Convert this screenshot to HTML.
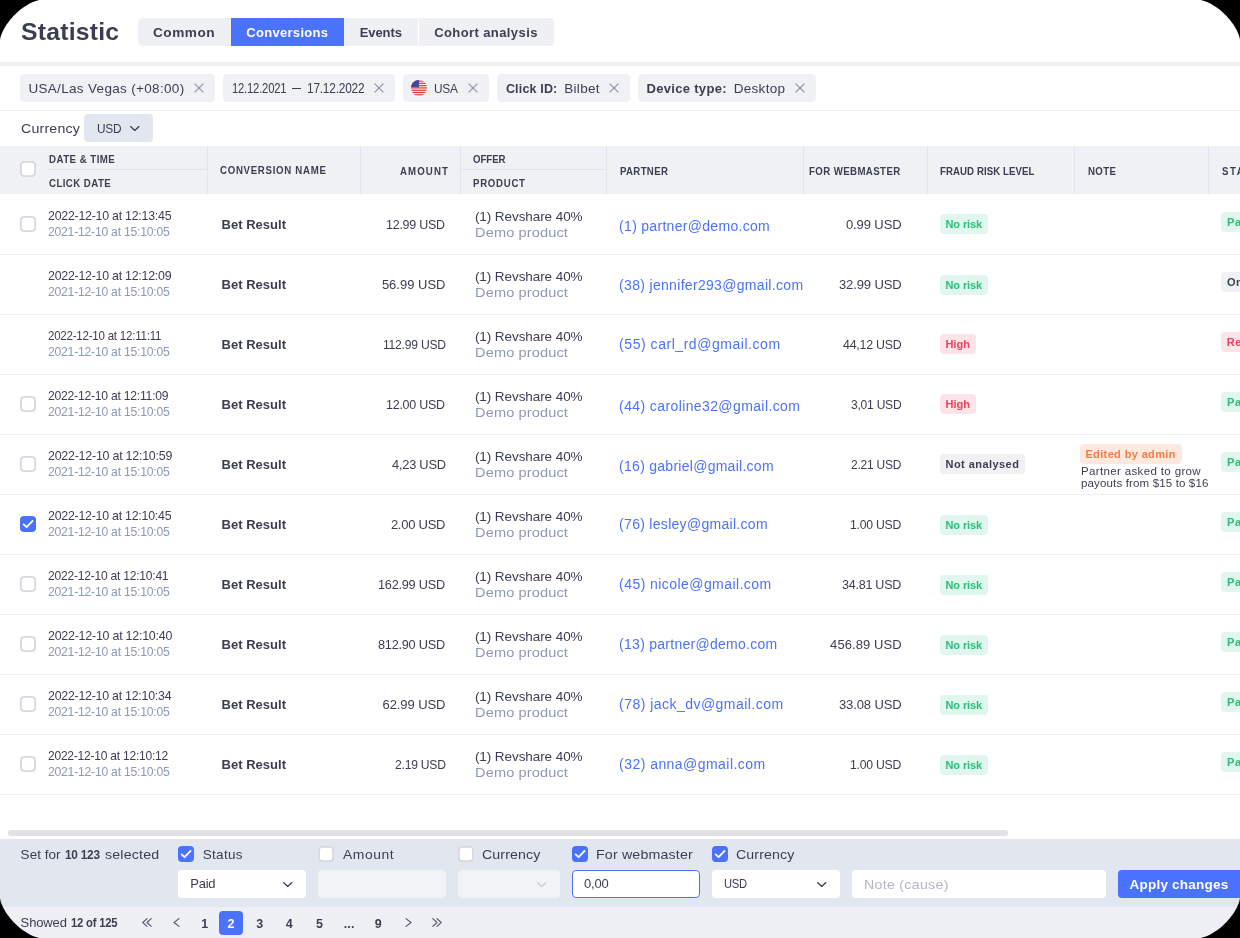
<!DOCTYPE html><html><head><meta charset="utf-8"><style>*{box-sizing:border-box;margin:0;padding:0}html,body{width:1240px;height:938px;overflow:hidden;background:#000}body{font-family:"Liberation Sans",sans-serif;color:#3a3e52;position:relative}.app{position:absolute;left:0;top:0;width:1240px;height:938px;background:#fff;overflow:hidden}.a{position:absolute;white-space:nowrap}.app{will-change:transform}</style></head><body><div class="app">
<div class="a" style="left:20.60px;top:20.00px;font-size:24.00px;line-height:24.00px;color:#3a3e52;font-weight:bold;letter-spacing:0.235px;transform:scaleX(1.030);transform-origin:0 0">Statistic</div>
<div class="a" style="left:138px;top:18px;width:416px;height:28px;background:#eff0f4;border-radius:5px;"></div>
<div class="a" style="left:231px;top:18px;width:113px;height:28px;background:#4b72fd;border-radius:0px;"></div>
<div class="a" style="left:418px;top:18px;width:1px;height:28px;background:#fff;border-radius:0px;"></div>
<div class="a" style="left:153.30px;top:26.00px;font-size:13.00px;line-height:13.00px;color:#3a3e52;font-weight:bold;letter-spacing:0.487px;transform:scaleX(1.050);transform-origin:0 0">Common</div>
<div class="a" style="left:246.30px;top:26.00px;font-size:13.00px;line-height:13.00px;color:#fff;font-weight:bold;letter-spacing:0.296px">Conversions</div>
<div class="a" style="left:359.70px;top:26.00px;font-size:13.00px;line-height:13.00px;color:#3a3e52;font-weight:bold;letter-spacing:-0.085px">Events</div>
<div class="a" style="left:434.20px;top:26.00px;font-size:13.00px;line-height:13.00px;color:#3a3e52;font-weight:bold;letter-spacing:0.405px">Cohort analysis</div>
<div class="a" style="left:0px;top:62px;width:1240px;height:4px;background:#eff0f4;border-radius:0px;"></div>
<div class="a" style="left:20px;top:74px;width:195px;height:28px;background:#eff1f5;border-radius:4px;"></div>
<div class="a" style="left:223px;top:74px;width:172px;height:28px;background:#eff1f5;border-radius:4px;"></div>
<div class="a" style="left:403px;top:74px;width:86px;height:28px;background:#eff1f5;border-radius:4px;"></div>
<div class="a" style="left:497px;top:74px;width:133px;height:28px;background:#eff1f5;border-radius:4px;"></div>
<div class="a" style="left:638px;top:74px;width:178px;height:28px;background:#eff1f5;border-radius:4px;"></div>
<div class="a" style="left:28.40px;top:82.00px;font-size:13.50px;line-height:13.50px;color:#3a3e52;letter-spacing:0.325px">USA/Las Vegas (+08:00)</div>
<svg class="a" style="left:194px;top:83px" width="10" height="10" viewBox="0 0 10 10"><path d="M0.6 0.6L9.4 9.4M9.4 0.6L0.6 9.4" stroke="#8a92aa" stroke-width="1.15" fill="none"/></svg>
<div class="a" style="left:232.00px;top:81.00px;font-size:14.00px;line-height:14.00px;color:#3a3e52;letter-spacing:-0.250px;transform:scaleX(0.804);transform-origin:0 0">12.12.2021</div>
<div class="a" style="left:292px;top:87.6px;width:9px;height:1.3px;background:#3a3e52;border-radius:0px;"></div>
<div class="a" style="left:306.50px;top:81.00px;font-size:14.00px;line-height:14.00px;color:#3a3e52;letter-spacing:-0.250px;transform:scaleX(0.848);transform-origin:0 0">17.12.2022</div>
<svg class="a" style="left:374px;top:83px" width="10" height="10" viewBox="0 0 10 10"><path d="M0.6 0.6L9.4 9.4M9.4 0.6L0.6 9.4" stroke="#8a92aa" stroke-width="1.15" fill="none"/></svg>
<svg class="a" style="left:411px;top:80px" width="16" height="16" viewBox="0 0 16 16"><defs><clipPath id="fc"><circle cx="8" cy="8" r="8"/></clipPath></defs><g clip-path="url(#fc)"><rect width="16" height="16" fill="#f5f5f5"/><rect y="0.40" width="16" height="1.25" fill="#e73b3b"/><rect y="2.70" width="16" height="1.25" fill="#e73b3b"/><rect y="5.00" width="16" height="1.25" fill="#e73b3b"/><rect y="7.30" width="16" height="1.25" fill="#e73b3b"/><rect y="9.60" width="16" height="1.25" fill="#e73b3b"/><rect y="11.90" width="16" height="1.25" fill="#e73b3b"/><rect y="14.20" width="16" height="1.25" fill="#e73b3b"/><rect width="8" height="7.3" fill="#41479b"/></g></svg>
<div class="a" style="left:433.90px;top:82.00px;font-size:13.00px;line-height:13.00px;color:#3a3e52;letter-spacing:-0.250px;transform:scaleX(0.915);transform-origin:0 0">USA</div>
<svg class="a" style="left:468px;top:83px" width="10" height="10" viewBox="0 0 10 10"><path d="M0.6 0.6L9.4 9.4M9.4 0.6L0.6 9.4" stroke="#8a92aa" stroke-width="1.15" fill="none"/></svg>
<div class="a" style="left:505.90px;top:83.00px;font-size:12.50px;line-height:12.50px;color:#3a3e52;font-weight:bold;letter-spacing:0.173px">Click ID:</div>
<div class="a" style="left:564.20px;top:82.00px;font-size:13.50px;line-height:13.50px;color:#3a3e52;letter-spacing:0.327px">Bilbet</div>
<svg class="a" style="left:609px;top:83px" width="10" height="10" viewBox="0 0 10 10"><path d="M0.6 0.6L9.4 9.4M9.4 0.6L0.6 9.4" stroke="#8a92aa" stroke-width="1.15" fill="none"/></svg>
<div class="a" style="left:646.60px;top:82.00px;font-size:13.00px;line-height:13.00px;color:#3a3e52;font-weight:bold;letter-spacing:0.300px">Device type:</div>
<div class="a" style="left:733.70px;top:82.00px;font-size:13.50px;line-height:13.50px;color:#3a3e52;letter-spacing:0.297px">Desktop</div>
<svg class="a" style="left:795px;top:83px" width="10" height="10" viewBox="0 0 10 10"><path d="M0.6 0.6L9.4 9.4M9.4 0.6L0.6 9.4" stroke="#8a92aa" stroke-width="1.15" fill="none"/></svg>
<div class="a" style="left:0px;top:110px;width:1240px;height:1px;background:#eef0f4;border-radius:0px;"></div>
<div class="a" style="left:20.80px;top:122.00px;font-size:13.50px;line-height:13.50px;color:#3a3e52;letter-spacing:0.189px;transform:scaleX(1.050);transform-origin:0 0">Currency</div>
<div class="a" style="left:84px;top:114px;width:69px;height:28px;background:#e2e6ee;border-radius:4px;"></div>
<div class="a" style="left:96.60px;top:122.00px;font-size:13.00px;line-height:13.00px;color:#3a3e52;letter-spacing:-0.250px;transform:scaleX(0.913);transform-origin:0 0">USD</div>
<svg class="a" style="left:130.2px;top:126.4px;overflow:visible" width="9.5" height="5" viewBox="0 0 9.5 5"><path d="M0.6 0.6L4.75 4.4L8.9 0.6" stroke="#3a3e52" stroke-width="1.3" fill="none" stroke-linecap="round" stroke-linejoin="round"/></svg>
<div class="a" style="left:0px;top:146px;width:1240px;height:48px;background:#eff1f5;border-radius:0px;"></div>
<div class="a" style="left:207px;top:146px;width:1px;height:48px;background:#dfe4ed;border-radius:0px;"></div>
<div class="a" style="left:360px;top:146px;width:1px;height:48px;background:#dfe4ed;border-radius:0px;"></div>
<div class="a" style="left:460px;top:146px;width:1px;height:48px;background:#dfe4ed;border-radius:0px;"></div>
<div class="a" style="left:606px;top:146px;width:1px;height:48px;background:#dfe4ed;border-radius:0px;"></div>
<div class="a" style="left:803px;top:146px;width:1px;height:48px;background:#dfe4ed;border-radius:0px;"></div>
<div class="a" style="left:927px;top:146px;width:1px;height:48px;background:#dfe4ed;border-radius:0px;"></div>
<div class="a" style="left:1074px;top:146px;width:1px;height:48px;background:#dfe4ed;border-radius:0px;"></div>
<div class="a" style="left:1208px;top:146px;width:1px;height:48px;background:#dfe4ed;border-radius:0px;"></div>
<div class="a" style="left:48px;top:169px;width:159px;height:1px;background:#dfe4ed;border-radius:0px;"></div>
<div class="a" style="left:460px;top:169px;width:146px;height:1px;background:#dfe4ed;border-radius:0px;"></div>
<svg class="a" style="left:20px;top:161px" width="16" height="16" viewBox="0 0 16 16"><rect x="0.9" y="0.9" width="14.2" height="14.2" rx="3.3" fill="#fff" stroke="#d5d8df" stroke-width="1.8"/></svg>
<div class="a" style="left:48.50px;top:154.00px;font-size:11.50px;line-height:11.50px;color:#3a3e52;font-weight:bold;letter-spacing:0.572px;transform:scaleX(0.840);transform-origin:0 0">DATE &amp; TIME</div>
<div class="a" style="left:48.50px;top:178.00px;font-size:11.50px;line-height:11.50px;color:#3a3e52;font-weight:bold;letter-spacing:0.519px;transform:scaleX(0.840);transform-origin:0 0">CLICK DATE</div>
<div class="a" style="left:220.30px;top:165.00px;font-size:11.50px;line-height:11.50px;color:#3a3e52;font-weight:bold;letter-spacing:0.836px;transform:scaleX(0.840);transform-origin:0 0">CONVERSION NAME</div>
<div class="a" style="left:399.80px;top:166.00px;font-size:11.50px;line-height:11.50px;color:#3a3e52;font-weight:bold;letter-spacing:1.312px;transform:scaleX(0.840);transform-origin:0 0">AMOUNT</div>
<div class="a" style="left:473.20px;top:154.00px;font-size:11.50px;line-height:11.50px;color:#3a3e52;font-weight:bold;letter-spacing:-0.041px;transform:scaleX(0.840);transform-origin:0 0">OFFER</div>
<div class="a" style="left:473.20px;top:178.00px;font-size:11.50px;line-height:11.50px;color:#3a3e52;font-weight:bold;letter-spacing:0.841px;transform:scaleX(0.840);transform-origin:0 0">PRODUCT</div>
<div class="a" style="left:619.50px;top:166.00px;font-size:11.50px;line-height:11.50px;color:#3a3e52;font-weight:bold;letter-spacing:0.383px;transform:scaleX(0.840);transform-origin:0 0">PARTNER</div>
<div class="a" style="left:809.20px;top:166.00px;font-size:11.50px;line-height:11.50px;color:#3a3e52;font-weight:bold;letter-spacing:0.476px;transform:scaleX(0.840);transform-origin:0 0">FOR WEBMASTER</div>
<div class="a" style="left:940.30px;top:166.00px;font-size:11.50px;line-height:11.50px;color:#3a3e52;font-weight:bold;letter-spacing:0.081px;transform:scaleX(0.840);transform-origin:0 0">FRAUD RISK LEVEL</div>
<div class="a" style="left:1087.50px;top:166.00px;font-size:11.50px;line-height:11.50px;color:#3a3e52;font-weight:bold;letter-spacing:0.462px;transform:scaleX(0.840);transform-origin:0 0">NOTE</div>
<div class="a" style="left:1221.50px;top:166.00px;font-size:11.50px;line-height:11.50px;color:#3a3e52;font-weight:bold;letter-spacing:1.855px;transform:scaleX(0.840);transform-origin:0 0">STATUS</div>
<div class="a" style="left:0px;top:254px;width:1240px;height:1px;background:#eff0f4;border-radius:0px;"></div>
<svg class="a" style="left:20px;top:216px" width="16" height="16" viewBox="0 0 16 16"><rect x="0.9" y="0.9" width="14.2" height="14.2" rx="3.3" fill="#fff" stroke="#d5d8df" stroke-width="1.8"/></svg>
<div class="a" style="left:48.20px;top:209.00px;font-size:13.00px;line-height:13.00px;color:#3a3e52;letter-spacing:-0.250px;transform:scaleX(0.951);transform-origin:0 0">2022-12-10 at 12:13:45</div>
<div class="a" style="left:48.20px;top:225.00px;font-size:13.00px;line-height:13.00px;color:#8c98b4;letter-spacing:-0.250px;transform:scaleX(0.937);transform-origin:0 0">2021-12-10 at 15:10:05</div>
<div class="a" style="left:221.50px;top:218.00px;font-size:13.00px;line-height:13.00px;color:#3a3e52;font-weight:bold;letter-spacing:0.024px">Bet Result</div>
<div class="a" style="left:386.40px;top:218.00px;font-size:13.00px;line-height:13.00px;color:#3a3e52;letter-spacing:-0.250px;transform:scaleX(0.959);transform-origin:0 0">12.99 USD</div>
<div class="a" style="left:474.90px;top:210.00px;font-size:13.50px;line-height:13.50px;color:#3a3e52;letter-spacing:-0.073px">(1) Revshare 40%</div>
<div class="a" style="left:474.90px;top:226.00px;font-size:13.50px;line-height:13.50px;color:#8c98b4;letter-spacing:0.111px;transform:scaleX(1.080);transform-origin:0 0">Demo product</div>
<div class="a" style="left:619.10px;top:219.00px;font-size:14.00px;line-height:14.00px;color:#4b72fd;letter-spacing:0.299px">(1) partner@demo.com</div>
<div class="a" style="left:845.90px;top:218.00px;font-size:13.00px;line-height:13.00px;color:#3a3e52;letter-spacing:-0.094px">0.99 USD</div>
<div class="a" style="left:940px;top:214px;width:48.2px;height:20px;background:#e0f6ee;border-radius:4px;"></div>
<div class="a" style="left:945.50px;top:219.00px;font-size:11.00px;line-height:11.00px;color:#27c17a;font-weight:bold;letter-spacing:-0.102px">No risk</div>
<div class="a" style="left:1221px;top:212px;width:60px;height:20px;background:#e0f6ee;border-radius:4px;"></div>
<div class="a" style="left:1226.70px;top:217.00px;font-size:11.00px;line-height:11.00px;color:#27c17a;font-weight:bold;letter-spacing:0.550px;transform:scaleX(1.008);transform-origin:0 0">Paid</div>
<div class="a" style="left:0px;top:314px;width:1240px;height:1px;background:#eff0f4;border-radius:0px;"></div>
<div class="a" style="left:48.20px;top:269.00px;font-size:13.00px;line-height:13.00px;color:#3a3e52;letter-spacing:-0.250px;transform:scaleX(0.951);transform-origin:0 0">2022-12-10 at 12:12:09</div>
<div class="a" style="left:48.20px;top:285.00px;font-size:13.00px;line-height:13.00px;color:#8c98b4;letter-spacing:-0.250px;transform:scaleX(0.937);transform-origin:0 0">2021-12-10 at 15:10:05</div>
<div class="a" style="left:221.50px;top:278.00px;font-size:13.00px;line-height:13.00px;color:#3a3e52;font-weight:bold;letter-spacing:0.024px">Bet Result</div>
<div class="a" style="left:381.90px;top:278.00px;font-size:13.00px;line-height:13.00px;color:#3a3e52">56.99 USD</div>
<div class="a" style="left:474.90px;top:270.00px;font-size:13.50px;line-height:13.50px;color:#3a3e52;letter-spacing:-0.073px">(1) Revshare 40%</div>
<div class="a" style="left:474.90px;top:286.00px;font-size:13.50px;line-height:13.50px;color:#8c98b4;letter-spacing:0.111px;transform:scaleX(1.080);transform-origin:0 0">Demo product</div>
<div class="a" style="left:619.10px;top:278.00px;font-size:14.00px;line-height:14.00px;color:#4b72fd;letter-spacing:0.317px">(38) jennifer293@gmail.com</div>
<div class="a" style="left:839.00px;top:278.00px;font-size:13.00px;line-height:13.00px;color:#3a3e52;letter-spacing:-0.124px">32.99 USD</div>
<div class="a" style="left:940px;top:275px;width:48.2px;height:20px;background:#e0f6ee;border-radius:4px;"></div>
<div class="a" style="left:945.50px;top:280.00px;font-size:11.00px;line-height:11.00px;color:#27c17a;font-weight:bold;letter-spacing:-0.102px">No risk</div>
<div class="a" style="left:1221px;top:272px;width:60px;height:20px;background:#eff1f5;border-radius:4px;"></div>
<div class="a" style="left:1226.70px;top:277.00px;font-size:11.00px;line-height:11.00px;color:#3a3e52;font-weight:bold;letter-spacing:0.550px;transform:scaleX(1.001);transform-origin:0 0">On hold</div>
<div class="a" style="left:0px;top:374px;width:1240px;height:1px;background:#eff0f4;border-radius:0px;"></div>
<div class="a" style="left:48.20px;top:329.00px;font-size:13.00px;line-height:13.00px;color:#3a3e52;letter-spacing:-0.250px;transform:scaleX(0.886);transform-origin:0 0">2022-12-10 at 12:11:11</div>
<div class="a" style="left:48.20px;top:345.00px;font-size:13.00px;line-height:13.00px;color:#8c98b4;letter-spacing:-0.250px;transform:scaleX(0.937);transform-origin:0 0">2021-12-10 at 15:10:05</div>
<div class="a" style="left:221.50px;top:338.00px;font-size:13.00px;line-height:13.00px;color:#3a3e52;font-weight:bold;letter-spacing:0.024px">Bet Result</div>
<div class="a" style="left:382.50px;top:338.00px;font-size:13.00px;line-height:13.00px;color:#3a3e52;letter-spacing:-0.250px;transform:scaleX(0.932);transform-origin:0 0">112.99 USD</div>
<div class="a" style="left:474.90px;top:330.00px;font-size:13.50px;line-height:13.50px;color:#3a3e52;letter-spacing:-0.073px">(1) Revshare 40%</div>
<div class="a" style="left:474.90px;top:346.00px;font-size:13.50px;line-height:13.50px;color:#8c98b4;letter-spacing:0.111px;transform:scaleX(1.080);transform-origin:0 0">Demo product</div>
<div class="a" style="left:619.10px;top:337.00px;font-size:14.00px;line-height:14.00px;color:#4b72fd;letter-spacing:0.543px">(55) carl_rd@gmail.com</div>
<div class="a" style="left:842.90px;top:338.00px;font-size:13.00px;line-height:13.00px;color:#3a3e52;letter-spacing:-0.250px;transform:scaleX(0.953);transform-origin:0 0">44,12 USD</div>
<div class="a" style="left:940px;top:334px;width:36px;height:20px;background:#fde4e8;border-radius:4px;"></div>
<div class="a" style="left:945.50px;top:339.00px;font-size:11.00px;line-height:11.00px;color:#f0425c;font-weight:bold;letter-spacing:0.019px">High</div>
<div class="a" style="left:1221px;top:332px;width:60px;height:20px;background:#fde4e8;border-radius:4px;"></div>
<div class="a" style="left:1226.70px;top:337.00px;font-size:11.00px;line-height:11.00px;color:#f0425c;font-weight:bold;letter-spacing:0.524px">Rejected</div>
<div class="a" style="left:0px;top:434px;width:1240px;height:1px;background:#eff0f4;border-radius:0px;"></div>
<svg class="a" style="left:20px;top:396px" width="16" height="16" viewBox="0 0 16 16"><rect x="0.9" y="0.9" width="14.2" height="14.2" rx="3.3" fill="#fff" stroke="#d5d8df" stroke-width="1.8"/></svg>
<div class="a" style="left:48.20px;top:389.00px;font-size:13.00px;line-height:13.00px;color:#3a3e52;letter-spacing:-0.250px;transform:scaleX(0.935);transform-origin:0 0">2022-12-10 at 12:11:09</div>
<div class="a" style="left:48.20px;top:405.00px;font-size:13.00px;line-height:13.00px;color:#8c98b4;letter-spacing:-0.250px;transform:scaleX(0.937);transform-origin:0 0">2021-12-10 at 15:10:05</div>
<div class="a" style="left:221.50px;top:398.00px;font-size:13.00px;line-height:13.00px;color:#3a3e52;font-weight:bold;letter-spacing:0.024px">Bet Result</div>
<div class="a" style="left:386.40px;top:398.00px;font-size:13.00px;line-height:13.00px;color:#3a3e52;letter-spacing:-0.250px;transform:scaleX(0.959);transform-origin:0 0">12.00 USD</div>
<div class="a" style="left:474.90px;top:390.00px;font-size:13.50px;line-height:13.50px;color:#3a3e52;letter-spacing:-0.073px">(1) Revshare 40%</div>
<div class="a" style="left:474.90px;top:406.00px;font-size:13.50px;line-height:13.50px;color:#8c98b4;letter-spacing:0.111px;transform:scaleX(1.080);transform-origin:0 0">Demo product</div>
<div class="a" style="left:619.10px;top:399.00px;font-size:14.00px;line-height:14.00px;color:#4b72fd;letter-spacing:0.392px">(44) caroline32@gmail.com</div>
<div class="a" style="left:851.00px;top:398.00px;font-size:13.00px;line-height:13.00px;color:#3a3e52;letter-spacing:-0.250px;transform:scaleX(0.927);transform-origin:0 0">3,01 USD</div>
<div class="a" style="left:940px;top:394px;width:36px;height:20px;background:#fde4e8;border-radius:4px;"></div>
<div class="a" style="left:945.50px;top:399.00px;font-size:11.00px;line-height:11.00px;color:#f0425c;font-weight:bold;letter-spacing:0.019px">High</div>
<div class="a" style="left:1221px;top:392px;width:60px;height:20px;background:#e0f6ee;border-radius:4px;"></div>
<div class="a" style="left:1226.70px;top:397.00px;font-size:11.00px;line-height:11.00px;color:#27c17a;font-weight:bold;letter-spacing:0.550px;transform:scaleX(1.008);transform-origin:0 0">Paid</div>
<div class="a" style="left:0px;top:494px;width:1240px;height:1px;background:#eff0f4;border-radius:0px;"></div>
<svg class="a" style="left:20px;top:456px" width="16" height="16" viewBox="0 0 16 16"><rect x="0.9" y="0.9" width="14.2" height="14.2" rx="3.3" fill="#fff" stroke="#d5d8df" stroke-width="1.8"/></svg>
<div class="a" style="left:48.20px;top:449.00px;font-size:13.00px;line-height:13.00px;color:#3a3e52;letter-spacing:-0.250px;transform:scaleX(0.957);transform-origin:0 0">2022-12-10 at 12:10:59</div>
<div class="a" style="left:48.20px;top:465.00px;font-size:13.00px;line-height:13.00px;color:#8c98b4;letter-spacing:-0.250px;transform:scaleX(0.937);transform-origin:0 0">2021-12-10 at 15:10:05</div>
<div class="a" style="left:221.50px;top:458.00px;font-size:13.00px;line-height:13.00px;color:#3a3e52;font-weight:bold;letter-spacing:0.024px">Bet Result</div>
<div class="a" style="left:391.50px;top:458.00px;font-size:13.00px;line-height:13.00px;color:#3a3e52;letter-spacing:-0.250px;transform:scaleX(0.989);transform-origin:0 0">4,23 USD</div>
<div class="a" style="left:474.90px;top:450.00px;font-size:13.50px;line-height:13.50px;color:#3a3e52;letter-spacing:-0.073px">(1) Revshare 40%</div>
<div class="a" style="left:474.90px;top:466.00px;font-size:13.50px;line-height:13.50px;color:#8c98b4;letter-spacing:0.111px;transform:scaleX(1.080);transform-origin:0 0">Demo product</div>
<div class="a" style="left:619.10px;top:459.00px;font-size:14.00px;line-height:14.00px;color:#4b72fd;letter-spacing:0.270px">(16) gabriel@gmail.com</div>
<div class="a" style="left:851.30px;top:458.00px;font-size:13.00px;line-height:13.00px;color:#3a3e52;letter-spacing:-0.250px;transform:scaleX(0.921);transform-origin:0 0">2.21 USD</div>
<div class="a" style="left:940px;top:454px;width:84.9px;height:20px;background:#eff1f5;border-radius:4px;"></div>
<div class="a" style="left:945.50px;top:459.00px;font-size:11.00px;line-height:11.00px;color:#3a3e52;font-weight:bold;letter-spacing:0.449px">Not analysed</div>
<div class="a" style="left:1221px;top:452px;width:60px;height:20px;background:#e0f6ee;border-radius:4px;"></div>
<div class="a" style="left:1226.70px;top:457.00px;font-size:11.00px;line-height:11.00px;color:#27c17a;font-weight:bold;letter-spacing:0.550px;transform:scaleX(1.008);transform-origin:0 0">Paid</div>
<div class="a" style="left:1080px;top:444px;width:102px;height:20px;background:#fde9e0;border-radius:4px;"></div>
<div class="a" style="left:1085.40px;top:449.00px;font-size:11.00px;line-height:11.00px;color:#f67c46;font-weight:bold;letter-spacing:0.368px">Edited by admin</div>
<div class="a" style="left:1080.60px;top:466.00px;font-size:11.00px;line-height:11.00px;color:#3a3e52;letter-spacing:0.318px;transform:scaleX(1.050);transform-origin:0 0">Partner asked to grow</div>
<div class="a" style="left:1080.60px;top:478.00px;font-size:11.00px;line-height:11.00px;color:#3a3e52;letter-spacing:0.123px;transform:scaleX(1.050);transform-origin:0 0">payouts from $15 to $16</div>
<div class="a" style="left:0px;top:554px;width:1240px;height:1px;background:#eff0f4;border-radius:0px;"></div>
<svg class="a" style="left:20px;top:516px" width="16" height="16" viewBox="0 0 16 16"><rect x="0" y="0" width="16" height="16" rx="4" fill="#4b72fd"/><path d="M3.6 8.4L6.6 11.2L12.6 4.9" stroke="#fff" stroke-width="1.8" fill="none" stroke-linecap="round" stroke-linejoin="round"/></svg>
<div class="a" style="left:48.20px;top:509.00px;font-size:13.00px;line-height:13.00px;color:#3a3e52;letter-spacing:-0.250px;transform:scaleX(0.951);transform-origin:0 0">2022-12-10 at 12:10:45</div>
<div class="a" style="left:48.20px;top:525.00px;font-size:13.00px;line-height:13.00px;color:#8c98b4;letter-spacing:-0.250px;transform:scaleX(0.937);transform-origin:0 0">2021-12-10 at 15:10:05</div>
<div class="a" style="left:221.50px;top:518.00px;font-size:13.00px;line-height:13.00px;color:#3a3e52;font-weight:bold;letter-spacing:0.024px">Bet Result</div>
<div class="a" style="left:390.90px;top:518.00px;font-size:13.00px;line-height:13.00px;color:#3a3e52;letter-spacing:-0.250px;transform:scaleX(1.000);transform-origin:0 0">2.00 USD</div>
<div class="a" style="left:474.90px;top:510.00px;font-size:13.50px;line-height:13.50px;color:#3a3e52;letter-spacing:-0.073px">(1) Revshare 40%</div>
<div class="a" style="left:474.90px;top:526.00px;font-size:13.50px;line-height:13.50px;color:#8c98b4;letter-spacing:0.111px;transform:scaleX(1.080);transform-origin:0 0">Demo product</div>
<div class="a" style="left:619.10px;top:517.00px;font-size:14.00px;line-height:14.00px;color:#4b72fd;letter-spacing:0.295px">(76) lesley@gmail.com</div>
<div class="a" style="left:850.40px;top:518.00px;font-size:13.00px;line-height:13.00px;color:#3a3e52;letter-spacing:-0.250px;transform:scaleX(0.938);transform-origin:0 0">1.00 USD</div>
<div class="a" style="left:940px;top:515px;width:48.2px;height:20px;background:#e0f6ee;border-radius:4px;"></div>
<div class="a" style="left:945.50px;top:520.00px;font-size:11.00px;line-height:11.00px;color:#27c17a;font-weight:bold;letter-spacing:-0.102px">No risk</div>
<div class="a" style="left:1221px;top:512px;width:60px;height:20px;background:#e0f6ee;border-radius:4px;"></div>
<div class="a" style="left:1226.70px;top:517.00px;font-size:11.00px;line-height:11.00px;color:#27c17a;font-weight:bold;letter-spacing:0.550px;transform:scaleX(1.008);transform-origin:0 0">Paid</div>
<div class="a" style="left:0px;top:614px;width:1240px;height:1px;background:#eff0f4;border-radius:0px;"></div>
<svg class="a" style="left:20px;top:576px" width="16" height="16" viewBox="0 0 16 16"><rect x="0.9" y="0.9" width="14.2" height="14.2" rx="3.3" fill="#fff" stroke="#d5d8df" stroke-width="1.8"/></svg>
<div class="a" style="left:48.20px;top:569.00px;font-size:13.00px;line-height:13.00px;color:#3a3e52;letter-spacing:-0.250px;transform:scaleX(0.928);transform-origin:0 0">2022-12-10 at 12:10:41</div>
<div class="a" style="left:48.20px;top:585.00px;font-size:13.00px;line-height:13.00px;color:#8c98b4;letter-spacing:-0.250px;transform:scaleX(0.937);transform-origin:0 0">2021-12-10 at 15:10:05</div>
<div class="a" style="left:221.50px;top:578.00px;font-size:13.00px;line-height:13.00px;color:#3a3e52;font-weight:bold;letter-spacing:0.024px">Bet Result</div>
<div class="a" style="left:378.40px;top:578.00px;font-size:13.00px;line-height:13.00px;color:#3a3e52;letter-spacing:-0.250px;transform:scaleX(0.979);transform-origin:0 0">162.99 USD</div>
<div class="a" style="left:474.90px;top:570.00px;font-size:13.50px;line-height:13.50px;color:#3a3e52;letter-spacing:-0.073px">(1) Revshare 40%</div>
<div class="a" style="left:474.90px;top:586.00px;font-size:13.50px;line-height:13.50px;color:#8c98b4;letter-spacing:0.111px;transform:scaleX(1.080);transform-origin:0 0">Demo product</div>
<div class="a" style="left:619.10px;top:577.00px;font-size:14.00px;line-height:14.00px;color:#4b72fd;letter-spacing:0.436px">(45) nicole@gmail.com</div>
<div class="a" style="left:842.30px;top:578.00px;font-size:13.00px;line-height:13.00px;color:#3a3e52;letter-spacing:-0.250px;transform:scaleX(0.963);transform-origin:0 0">34.81 USD</div>
<div class="a" style="left:940px;top:575px;width:48.2px;height:20px;background:#e0f6ee;border-radius:4px;"></div>
<div class="a" style="left:945.50px;top:580.00px;font-size:11.00px;line-height:11.00px;color:#27c17a;font-weight:bold;letter-spacing:-0.102px">No risk</div>
<div class="a" style="left:1221px;top:572px;width:60px;height:20px;background:#e0f6ee;border-radius:4px;"></div>
<div class="a" style="left:1226.70px;top:577.00px;font-size:11.00px;line-height:11.00px;color:#27c17a;font-weight:bold;letter-spacing:0.550px;transform:scaleX(1.008);transform-origin:0 0">Paid</div>
<div class="a" style="left:0px;top:674px;width:1240px;height:1px;background:#eff0f4;border-radius:0px;"></div>
<svg class="a" style="left:20px;top:636px" width="16" height="16" viewBox="0 0 16 16"><rect x="0.9" y="0.9" width="14.2" height="14.2" rx="3.3" fill="#fff" stroke="#d5d8df" stroke-width="1.8"/></svg>
<div class="a" style="left:48.20px;top:629.00px;font-size:13.00px;line-height:13.00px;color:#3a3e52;letter-spacing:-0.250px;transform:scaleX(0.957);transform-origin:0 0">2022-12-10 at 12:10:40</div>
<div class="a" style="left:48.20px;top:645.00px;font-size:13.00px;line-height:13.00px;color:#8c98b4;letter-spacing:-0.250px;transform:scaleX(0.937);transform-origin:0 0">2021-12-10 at 15:10:05</div>
<div class="a" style="left:221.50px;top:638.00px;font-size:13.00px;line-height:13.00px;color:#3a3e52;font-weight:bold;letter-spacing:0.024px">Bet Result</div>
<div class="a" style="left:378.40px;top:638.00px;font-size:13.00px;line-height:13.00px;color:#3a3e52;letter-spacing:-0.250px;transform:scaleX(0.979);transform-origin:0 0">812.90 USD</div>
<div class="a" style="left:474.90px;top:630.00px;font-size:13.50px;line-height:13.50px;color:#3a3e52;letter-spacing:-0.073px">(1) Revshare 40%</div>
<div class="a" style="left:474.90px;top:646.00px;font-size:13.50px;line-height:13.50px;color:#8c98b4;letter-spacing:0.111px;transform:scaleX(1.080);transform-origin:0 0">Demo product</div>
<div class="a" style="left:619.10px;top:637.00px;font-size:14.00px;line-height:14.00px;color:#4b72fd;letter-spacing:0.269px">(13) partner@demo.com</div>
<div class="a" style="left:830.10px;top:638.00px;font-size:13.00px;line-height:13.00px;color:#3a3e52;letter-spacing:0.075px">456.89 USD</div>
<div class="a" style="left:940px;top:635px;width:48.2px;height:20px;background:#e0f6ee;border-radius:4px;"></div>
<div class="a" style="left:945.50px;top:640.00px;font-size:11.00px;line-height:11.00px;color:#27c17a;font-weight:bold;letter-spacing:-0.102px">No risk</div>
<div class="a" style="left:1221px;top:632px;width:60px;height:20px;background:#e0f6ee;border-radius:4px;"></div>
<div class="a" style="left:1226.70px;top:637.00px;font-size:11.00px;line-height:11.00px;color:#27c17a;font-weight:bold;letter-spacing:0.550px;transform:scaleX(1.008);transform-origin:0 0">Paid</div>
<div class="a" style="left:0px;top:734px;width:1240px;height:1px;background:#eff0f4;border-radius:0px;"></div>
<svg class="a" style="left:20px;top:696px" width="16" height="16" viewBox="0 0 16 16"><rect x="0.9" y="0.9" width="14.2" height="14.2" rx="3.3" fill="#fff" stroke="#d5d8df" stroke-width="1.8"/></svg>
<div class="a" style="left:48.20px;top:689.00px;font-size:13.00px;line-height:13.00px;color:#3a3e52;letter-spacing:-0.250px;transform:scaleX(0.951);transform-origin:0 0">2022-12-10 at 12:10:34</div>
<div class="a" style="left:48.20px;top:705.00px;font-size:13.00px;line-height:13.00px;color:#8c98b4;letter-spacing:-0.250px;transform:scaleX(0.937);transform-origin:0 0">2021-12-10 at 15:10:05</div>
<div class="a" style="left:221.50px;top:698.00px;font-size:13.00px;line-height:13.00px;color:#3a3e52;font-weight:bold;letter-spacing:0.024px">Bet Result</div>
<div class="a" style="left:382.50px;top:698.00px;font-size:13.00px;line-height:13.00px;color:#3a3e52;letter-spacing:-0.074px">62.99 USD</div>
<div class="a" style="left:474.90px;top:690.00px;font-size:13.50px;line-height:13.50px;color:#3a3e52;letter-spacing:-0.073px">(1) Revshare 40%</div>
<div class="a" style="left:474.90px;top:706.00px;font-size:13.50px;line-height:13.50px;color:#8c98b4;letter-spacing:0.111px;transform:scaleX(1.080);transform-origin:0 0">Demo product</div>
<div class="a" style="left:619.10px;top:697.00px;font-size:14.00px;line-height:14.00px;color:#4b72fd;letter-spacing:0.464px">(78) jack_dv@gmail.com</div>
<div class="a" style="left:839.00px;top:698.00px;font-size:13.00px;line-height:13.00px;color:#3a3e52;letter-spacing:-0.124px">33.08 USD</div>
<div class="a" style="left:940px;top:695px;width:48.2px;height:20px;background:#e0f6ee;border-radius:4px;"></div>
<div class="a" style="left:945.50px;top:700.00px;font-size:11.00px;line-height:11.00px;color:#27c17a;font-weight:bold;letter-spacing:-0.102px">No risk</div>
<div class="a" style="left:1221px;top:692px;width:60px;height:20px;background:#e0f6ee;border-radius:4px;"></div>
<div class="a" style="left:1226.70px;top:697.00px;font-size:11.00px;line-height:11.00px;color:#27c17a;font-weight:bold;letter-spacing:0.550px;transform:scaleX(1.008);transform-origin:0 0">Paid</div>
<div class="a" style="left:0px;top:794px;width:1240px;height:1px;background:#eff0f4;border-radius:0px;"></div>
<svg class="a" style="left:20px;top:756px" width="16" height="16" viewBox="0 0 16 16"><rect x="0.9" y="0.9" width="14.2" height="14.2" rx="3.3" fill="#fff" stroke="#d5d8df" stroke-width="1.8"/></svg>
<div class="a" style="left:48.20px;top:749.00px;font-size:13.00px;line-height:13.00px;color:#3a3e52;letter-spacing:-0.250px;transform:scaleX(0.925);transform-origin:0 0">2022-12-10 at 12:10:12</div>
<div class="a" style="left:48.20px;top:765.00px;font-size:13.00px;line-height:13.00px;color:#8c98b4;letter-spacing:-0.250px;transform:scaleX(0.937);transform-origin:0 0">2021-12-10 at 15:10:05</div>
<div class="a" style="left:221.50px;top:758.00px;font-size:13.00px;line-height:13.00px;color:#3a3e52;font-weight:bold;letter-spacing:0.024px">Bet Result</div>
<div class="a" style="left:394.50px;top:758.00px;font-size:13.00px;line-height:13.00px;color:#3a3e52;letter-spacing:-0.250px;transform:scaleX(0.934);transform-origin:0 0">2.19 USD</div>
<div class="a" style="left:474.90px;top:750.00px;font-size:13.50px;line-height:13.50px;color:#3a3e52;letter-spacing:-0.073px">(1) Revshare 40%</div>
<div class="a" style="left:474.90px;top:766.00px;font-size:13.50px;line-height:13.50px;color:#8c98b4;letter-spacing:0.111px;transform:scaleX(1.080);transform-origin:0 0">Demo product</div>
<div class="a" style="left:619.10px;top:757.00px;font-size:14.00px;line-height:14.00px;color:#4b72fd;letter-spacing:0.453px">(32) anna@gmail.com</div>
<div class="a" style="left:850.40px;top:758.00px;font-size:13.00px;line-height:13.00px;color:#3a3e52;letter-spacing:-0.250px;transform:scaleX(0.938);transform-origin:0 0">1.00 USD</div>
<div class="a" style="left:940px;top:755px;width:48.2px;height:20px;background:#e0f6ee;border-radius:4px;"></div>
<div class="a" style="left:945.50px;top:760.00px;font-size:11.00px;line-height:11.00px;color:#27c17a;font-weight:bold;letter-spacing:-0.102px">No risk</div>
<div class="a" style="left:1221px;top:752px;width:60px;height:20px;background:#e0f6ee;border-radius:4px;"></div>
<div class="a" style="left:1226.70px;top:757.00px;font-size:11.00px;line-height:11.00px;color:#27c17a;font-weight:bold;letter-spacing:0.550px;transform:scaleX(1.008);transform-origin:0 0">Paid</div>
<div class="a" style="left:8px;top:830px;width:1000px;height:6px;background:#e2e2e4;border-radius:3px;"></div>
<div class="a" style="left:0px;top:839px;width:1240px;height:68px;background:#e2e6ee;border-radius:0px;"></div>
<div class="a" style="left:0px;top:907px;width:1240px;height:31px;background:#eff0f5;border-radius:0px;"></div>
<div class="a" style="left:20.60px;top:848.00px;font-size:13.50px;line-height:13.50px;color:#3a3e52;letter-spacing:0.038px">Set for</div>
<div class="a" style="left:65.00px;top:848.00px;font-size:13.00px;line-height:13.00px;color:#3a3e52;font-weight:bold;letter-spacing:-0.250px;transform:scaleX(0.909);transform-origin:0 0">10 123</div>
<div class="a" style="left:104.80px;top:848.00px;font-size:13.50px;line-height:13.50px;color:#3a3e52;letter-spacing:0.190px;transform:scaleX(1.050);transform-origin:0 0">selected</div>
<svg class="a" style="left:178px;top:846px" width="16" height="16" viewBox="0 0 16 16"><rect x="0" y="0" width="16" height="16" rx="4" fill="#4b72fd"/><path d="M3.6 8.4L6.6 11.2L12.6 4.9" stroke="#fff" stroke-width="1.8" fill="none" stroke-linecap="round" stroke-linejoin="round"/></svg>
<div class="a" style="left:202.70px;top:848.00px;font-size:13.50px;line-height:13.50px;color:#3a3e52;letter-spacing:0.326px">Status</div>
<svg class="a" style="left:318px;top:846px" width="16" height="16" viewBox="0 0 16 16"><rect x="0.9" y="0.9" width="14.2" height="14.2" rx="3.3" fill="#fff" stroke="#d5d8df" stroke-width="1.8"/></svg>
<div class="a" style="left:342.70px;top:848.00px;font-size:13.50px;line-height:13.50px;color:#3a3e52;letter-spacing:0.550px;transform:scaleX(1.027);transform-origin:0 0">Amount</div>
<svg class="a" style="left:458px;top:846px" width="16" height="16" viewBox="0 0 16 16"><rect x="0.9" y="0.9" width="14.2" height="14.2" rx="3.3" fill="#fff" stroke="#d5d8df" stroke-width="1.8"/></svg>
<div class="a" style="left:482.40px;top:848.00px;font-size:13.50px;line-height:13.50px;color:#3a3e52;letter-spacing:0.121px;transform:scaleX(1.050);transform-origin:0 0">Currency</div>
<svg class="a" style="left:572px;top:846px" width="16" height="16" viewBox="0 0 16 16"><rect x="0" y="0" width="16" height="16" rx="4" fill="#4b72fd"/><path d="M3.6 8.4L6.6 11.2L12.6 4.9" stroke="#fff" stroke-width="1.8" fill="none" stroke-linecap="round" stroke-linejoin="round"/></svg>
<div class="a" style="left:596.30px;top:848.00px;font-size:13.50px;line-height:13.50px;color:#3a3e52;letter-spacing:0.172px;transform:scaleX(1.050);transform-origin:0 0">For webmaster</div>
<svg class="a" style="left:712px;top:846px" width="16" height="16" viewBox="0 0 16 16"><rect x="0" y="0" width="16" height="16" rx="4" fill="#4b72fd"/><path d="M3.6 8.4L6.6 11.2L12.6 4.9" stroke="#fff" stroke-width="1.8" fill="none" stroke-linecap="round" stroke-linejoin="round"/></svg>
<div class="a" style="left:736.40px;top:848.00px;font-size:13.50px;line-height:13.50px;color:#3a3e52;letter-spacing:0.121px;transform:scaleX(1.050);transform-origin:0 0">Currency</div>
<div class="a" style="left:178px;top:870px;width:128px;height:28px;background:#fff;border-radius:4px;"></div>
<div class="a" style="left:190.30px;top:877.00px;font-size:13.00px;line-height:13.00px;color:#3a3e52;letter-spacing:-0.238px">Paid</div>
<svg class="a" style="left:283.4px;top:881.8px;overflow:visible" width="9.5" height="5" viewBox="0 0 9.5 5"><path d="M0.6 0.6L4.75 4.4L8.9 0.6" stroke="#3a3e52" stroke-width="1.3" fill="none" stroke-linecap="round" stroke-linejoin="round"/></svg>
<div class="a" style="left:318px;top:870px;width:128px;height:28px;background:#f1f3f7;border-radius:4px;"></div>
<div class="a" style="left:458px;top:870px;width:102px;height:28px;background:#f1f3f7;border-radius:4px;"></div>
<svg class="a" style="left:537px;top:881.8px;overflow:visible" width="9.5" height="5" viewBox="0 0 9.5 5"><path d="M0.6 0.6L4.75 4.4L8.9 0.6" stroke="#c8cdd8" stroke-width="1.3" fill="none" stroke-linecap="round" stroke-linejoin="round"/></svg>
<div class="a" style="left:572px;top:870px;width:128px;height:28px;background:#fff;border:1px solid #4b72fd;border-radius:4px"></div>
<div class="a" style="left:583.90px;top:877.00px;font-size:13.00px;line-height:13.00px;color:#3a3e52;letter-spacing:-0.166px">0,00</div>
<div class="a" style="left:712px;top:870px;width:128px;height:28px;background:#fff;border-radius:4px;"></div>
<div class="a" style="left:724.20px;top:877.00px;font-size:13.00px;line-height:13.00px;color:#3a3e52;letter-spacing:-0.250px;transform:scaleX(0.861);transform-origin:0 0">USD</div>
<svg class="a" style="left:817px;top:881.8px;overflow:visible" width="9.5" height="5" viewBox="0 0 9.5 5"><path d="M0.6 0.6L4.75 4.4L8.9 0.6" stroke="#3a3e52" stroke-width="1.3" fill="none" stroke-linecap="round" stroke-linejoin="round"/></svg>
<div class="a" style="left:852px;top:870px;width:254px;height:28px;background:#fff;border-radius:4px;"></div>
<div class="a" style="left:864.10px;top:878.00px;font-size:13.50px;line-height:13.50px;color:#b0b7c8;letter-spacing:0.281px;transform:scaleX(1.050);transform-origin:0 0">Note (cause)</div>
<div class="a" style="left:1118px;top:870px;width:130px;height:28px;background:#4b72fd;border-radius:4px;"></div>
<div class="a" style="left:1129.50px;top:878.00px;font-size:13.50px;line-height:13.50px;color:#fff;font-weight:bold;letter-spacing:0.223px">Apply changes</div>
<div class="a" style="left:20.60px;top:916.00px;font-size:13.00px;line-height:13.00px;color:#3a3e52;letter-spacing:-0.136px">Showed</div>
<div class="a" style="left:71.10px;top:916.00px;font-size:13.00px;line-height:13.00px;color:#3a3e52;font-weight:bold;letter-spacing:-0.250px;transform:scaleX(0.869);transform-origin:0 0">12 of 125</div>
<svg class="a" style="left:142.4px;top:918px;overflow:visible" width="10" height="9" viewBox="0 0 10 9"><path d="M5 0.6L0.8 4.5L5 8.4 M9.2 0.6L5 4.5L9.2 8.4" stroke="#545a6e" stroke-width="1.2" fill="none" stroke-linecap="round" stroke-linejoin="round"/></svg>
<svg class="a" style="left:173px;top:918px;overflow:visible" width="7" height="9" viewBox="0 0 7 9"><path d="M6 0.6L1 4.5L6 8.4" stroke="#545a6e" stroke-width="1.2" fill="none" stroke-linecap="round" stroke-linejoin="round"/></svg>
<svg class="a" style="left:404.5px;top:918px;overflow:visible" width="7" height="9" viewBox="0 0 7 9"><path d="M1 0.6L6 4.5L1 8.4" stroke="#545a6e" stroke-width="1.2" fill="none" stroke-linecap="round" stroke-linejoin="round"/></svg>
<svg class="a" style="left:432.2px;top:918px;overflow:visible" width="10" height="9" viewBox="0 0 10 9"><path d="M0.8 0.6L5 4.5L0.8 8.4 M5 0.6L9.2 4.5L5 8.4" stroke="#545a6e" stroke-width="1.2" fill="none" stroke-linecap="round" stroke-linejoin="round"/></svg>
<div class="a" style="left:219px;top:911px;width:24px;height:24px;background:#4b72fd;border-radius:4px;"></div>
<div class="a" style="left:201.30px;top:918.00px;font-size:12.50px;line-height:12.50px;color:#3a3e52;font-weight:bold">1</div>
<div class="a" style="left:227.50px;top:918.00px;font-size:12.50px;line-height:12.50px;color:#fff;font-weight:bold">2</div>
<div class="a" style="left:256.30px;top:918.00px;font-size:12.50px;line-height:12.50px;color:#3a3e52;font-weight:bold">3</div>
<div class="a" style="left:285.80px;top:918.00px;font-size:12.50px;line-height:12.50px;color:#3a3e52;font-weight:bold">4</div>
<div class="a" style="left:315.90px;top:918.00px;font-size:12.50px;line-height:12.50px;color:#3a3e52;font-weight:bold">5</div>
<div class="a" style="left:343.80px;top:918.00px;font-size:12.50px;line-height:12.50px;color:#3a3e52;font-weight:bold;letter-spacing:0.094px">...</div>
<div class="a" style="left:374.80px;top:918.00px;font-size:12.50px;line-height:12.50px;color:#3a3e52;font-weight:bold">9</div>
<svg class="a" style="left:0;top:0" width="1240" height="938" viewBox="0 0 1240 938"><path d="M0.00 0.00 L40.30 0.00 L40.30 0.00 L39.85 0.03 L39.19 0.11 L38.40 0.26 L37.53 0.45 L36.60 0.71 L35.61 1.02 L34.57 1.38 L33.49 1.80 L32.38 2.27 L31.25 2.79 L30.09 3.36 L28.91 3.99 L27.72 4.66 L26.52 5.38 L25.32 6.14 L24.11 6.95 L22.91 7.80 L21.70 8.69 L20.51 9.62 L19.33 10.58 L18.16 11.58 L17.00 12.61 L15.87 13.67 L14.76 14.76 L13.67 15.87 L12.61 17.00 L11.58 18.16 L10.58 19.33 L9.62 20.51 L8.69 21.70 L7.80 22.91 L6.95 24.11 L6.14 25.32 L5.38 26.52 L4.66 27.72 L3.99 28.91 L3.36 30.09 L2.79 31.25 L2.27 32.38 L1.80 33.49 L1.38 34.57 L1.02 35.61 L0.71 36.60 L0.45 37.53 L0.26 38.40 L0.11 39.19 L0.03 39.85 L0.00 40.30 Z M1240.00 0.00 L1199.70 0.00 L1199.70 0.00 L1200.15 0.03 L1200.81 0.11 L1201.60 0.26 L1202.47 0.45 L1203.40 0.71 L1204.39 1.02 L1205.43 1.38 L1206.51 1.80 L1207.62 2.27 L1208.75 2.79 L1209.91 3.36 L1211.09 3.99 L1212.28 4.66 L1213.48 5.38 L1214.68 6.14 L1215.89 6.95 L1217.09 7.80 L1218.30 8.69 L1219.49 9.62 L1220.67 10.58 L1221.84 11.58 L1223.00 12.61 L1224.13 13.67 L1225.24 14.76 L1226.33 15.87 L1227.39 17.00 L1228.42 18.16 L1229.42 19.33 L1230.38 20.51 L1231.31 21.70 L1232.20 22.91 L1233.05 24.11 L1233.86 25.32 L1234.62 26.52 L1235.34 27.72 L1236.01 28.91 L1236.64 30.09 L1237.21 31.25 L1237.73 32.38 L1238.20 33.49 L1238.62 34.57 L1238.98 35.61 L1239.29 36.60 L1239.55 37.53 L1239.74 38.40 L1239.89 39.19 L1239.97 39.85 L1240.00 40.30 Z M0.00 938.00 L40.30 938.00 L40.30 938.00 L39.85 937.97 L39.19 937.89 L38.40 937.74 L37.53 937.55 L36.60 937.29 L35.61 936.98 L34.57 936.62 L33.49 936.20 L32.38 935.73 L31.25 935.21 L30.09 934.64 L28.91 934.01 L27.72 933.34 L26.52 932.62 L25.32 931.86 L24.11 931.05 L22.91 930.20 L21.70 929.31 L20.51 928.38 L19.33 927.42 L18.16 926.42 L17.00 925.39 L15.87 924.33 L14.76 923.24 L13.67 922.13 L12.61 921.00 L11.58 919.84 L10.58 918.67 L9.62 917.49 L8.69 916.30 L7.80 915.09 L6.95 913.89 L6.14 912.68 L5.38 911.48 L4.66 910.28 L3.99 909.09 L3.36 907.91 L2.79 906.75 L2.27 905.62 L1.80 904.51 L1.38 903.43 L1.02 902.39 L0.71 901.40 L0.45 900.47 L0.26 899.60 L0.11 898.81 L0.03 898.15 L0.00 897.70 Z M1240.00 938.00 L1199.70 938.00 L1199.70 938.00 L1200.15 937.97 L1200.81 937.89 L1201.60 937.74 L1202.47 937.55 L1203.40 937.29 L1204.39 936.98 L1205.43 936.62 L1206.51 936.20 L1207.62 935.73 L1208.75 935.21 L1209.91 934.64 L1211.09 934.01 L1212.28 933.34 L1213.48 932.62 L1214.68 931.86 L1215.89 931.05 L1217.09 930.20 L1218.30 929.31 L1219.49 928.38 L1220.67 927.42 L1221.84 926.42 L1223.00 925.39 L1224.13 924.33 L1225.24 923.24 L1226.33 922.13 L1227.39 921.00 L1228.42 919.84 L1229.42 918.67 L1230.38 917.49 L1231.31 916.30 L1232.20 915.09 L1233.05 913.89 L1233.86 912.68 L1234.62 911.48 L1235.34 910.28 L1236.01 909.09 L1236.64 907.91 L1237.21 906.75 L1237.73 905.62 L1238.20 904.51 L1238.62 903.43 L1238.98 902.39 L1239.29 901.40 L1239.55 900.47 L1239.74 899.60 L1239.89 898.81 L1239.97 898.15 L1240.00 897.70 Z" fill="#000"/></svg>
</div></body></html>
